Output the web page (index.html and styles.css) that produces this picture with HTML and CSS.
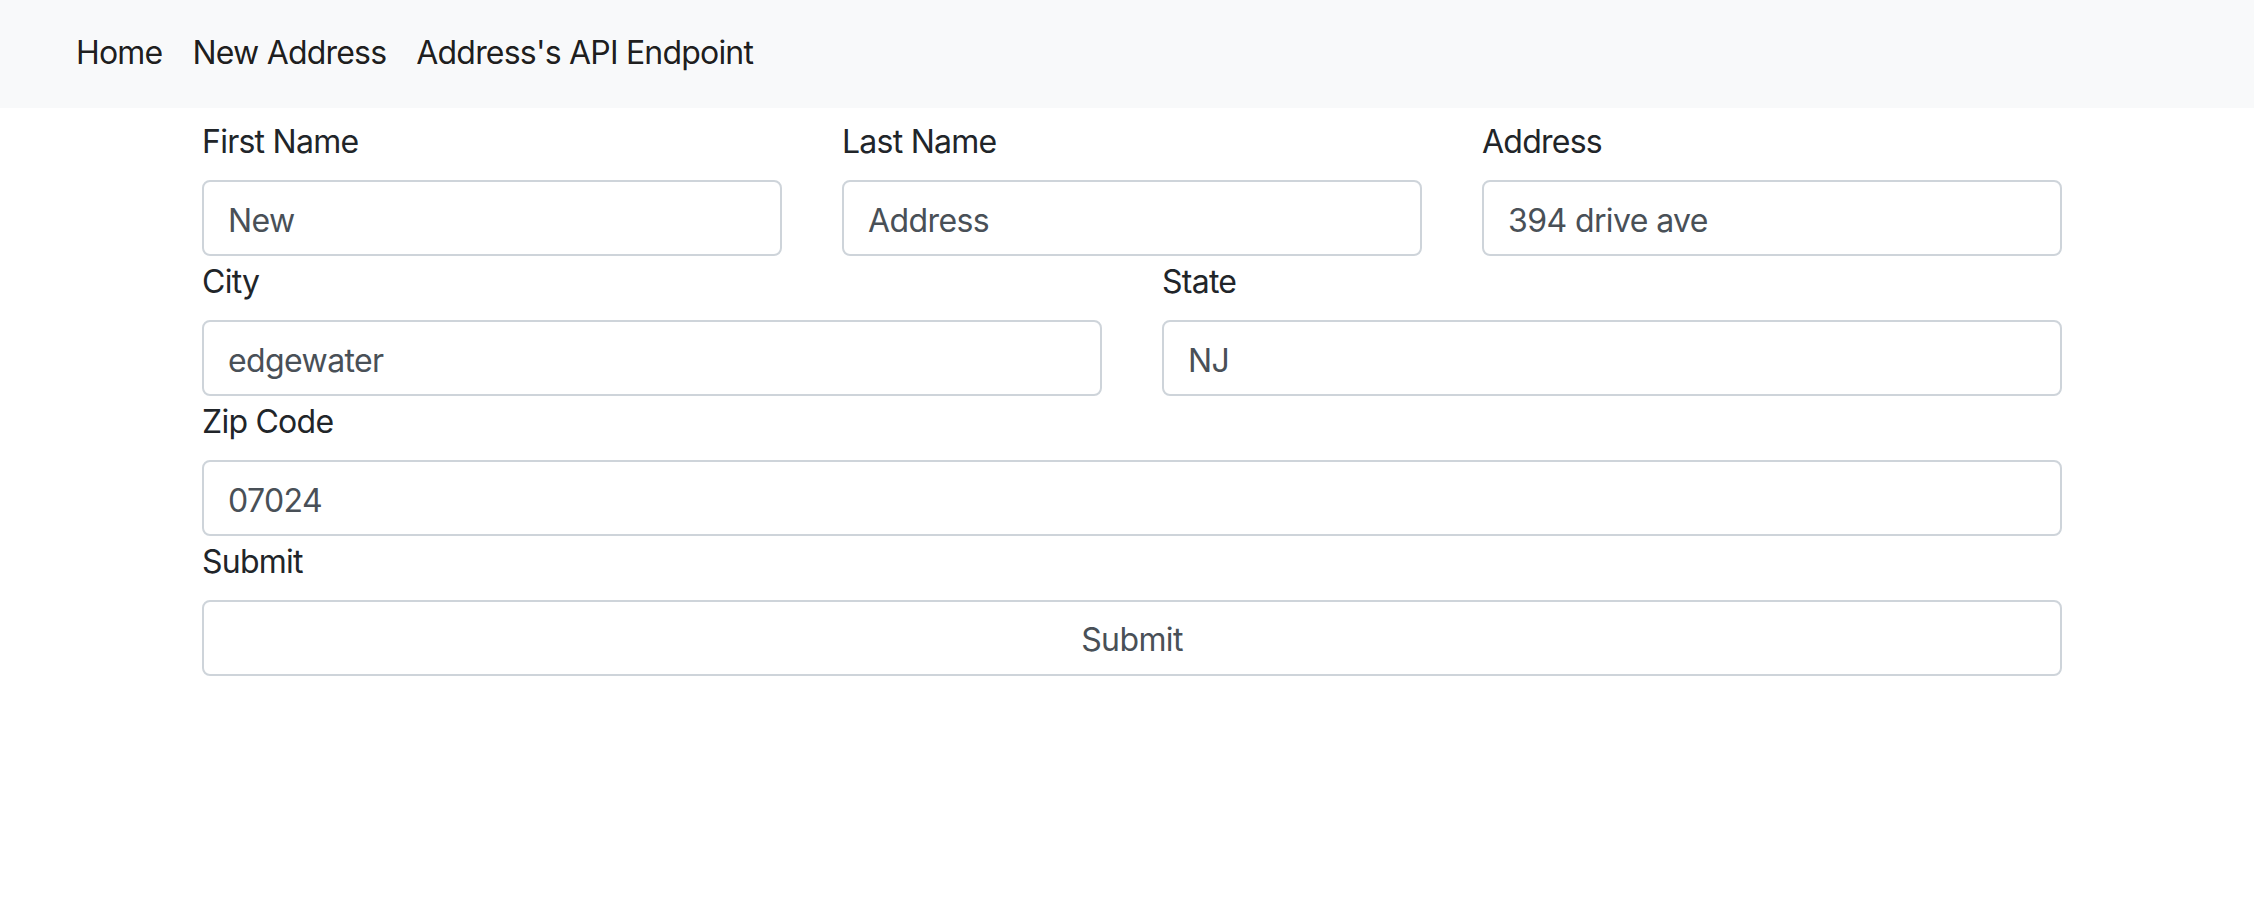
FILE: index.html
```html
<!DOCTYPE html>
<html lang="en">
<head>
<meta charset="utf-8">
<title>New Address</title>
<link rel="stylesheet" href="styles.css">
</head>
<body>
<nav class="navbar">
  <a class="nav-link" href="#">Home</a>
  <a class="nav-link" href="#">New Address</a>
  <a class="nav-link" href="#">Address's API Endpoint</a>
</nav>
<main class="container">
  <form class="address-form">
    <div class="row row-3">
      <div class="field">
        <label class="field-label" for="first">First Name</label>
        <input class="form-control" id="first" type="text" value="New">
      </div>
      <div class="field">
        <label class="field-label" for="last">Last Name</label>
        <input class="form-control" id="last" type="text" value="Address">
      </div>
      <div class="field">
        <label class="field-label" for="addr">Address</label>
        <input class="form-control" id="addr" type="text" value="394 drive ave">
      </div>
    </div>
    <div class="row row-2">
      <div class="field">
        <label class="field-label" for="city">City</label>
        <input class="form-control" id="city" type="text" value="edgewater">
      </div>
      <div class="field">
        <label class="field-label" for="state">State</label>
        <input class="form-control" id="state" type="text" value="NJ">
      </div>
    </div>
    <div class="row row-1">
      <div class="field">
        <label class="field-label" for="zip">Zip Code</label>
        <input class="form-control" id="zip" type="text" value="07024">
      </div>
    </div>
    <div class="row row-1">
      <div class="field">
        <label class="field-label" for="submit">Submit</label>
        <input class="form-control submit" id="submit" type="submit" value="Submit">
      </div>
    </div>
  </form>
</main>
</body>
</html>
```
FILE: styles.css
```css
* {
  box-sizing: border-box;
}

html, body {
  margin: 0;
  padding: 0;
  background: #ffffff;
}

body {
  font-family: "Inter", "Noto Sans", sans-serif;
  font-size: 32px;
  line-height: 48px;
  color: #212529;
}

.navbar {
  display: flex;
  align-items: flex-start;
  height: 108px;
  padding: 29px 0 0 61px;
  background: #f8f9fa;
}

.nav-link {
  display: block;
  padding: 0 15px;
  color: rgba(0, 0, 0, 0.9);
  text-decoration: none;
  letter-spacing: -0.8px;
}

.container {
  width: 1860px;
  margin-left: 202px;
  padding-top: 8px;
}

.row {
  display: grid;
  column-gap: 60px;
}

.row-3 {
  grid-template-columns: repeat(3, 1fr);
}

.row-2 {
  grid-template-columns: repeat(2, 1fr);
}

.row-1 {
  grid-template-columns: 1fr;
}

.field {
  display: flex;
  flex-direction: column;
}

.field-label {
  display: block;
  padding-top: 2px;
  margin-bottom: 14px;
  letter-spacing: -0.75px;
}

.form-control {
  display: block;
  width: 100%;
  height: 76px;
  padding: 14px 24px 10px;
  font-family: inherit;
  font-size: 32px;
  line-height: 48px;
  color: #495057;
  background: #ffffff;
  border: 2px solid #ced4da;
  border-radius: 8px;
  letter-spacing: -0.6px;
  outline: none;
}

.submit {
  text-align: center;
  cursor: pointer;
}
```
